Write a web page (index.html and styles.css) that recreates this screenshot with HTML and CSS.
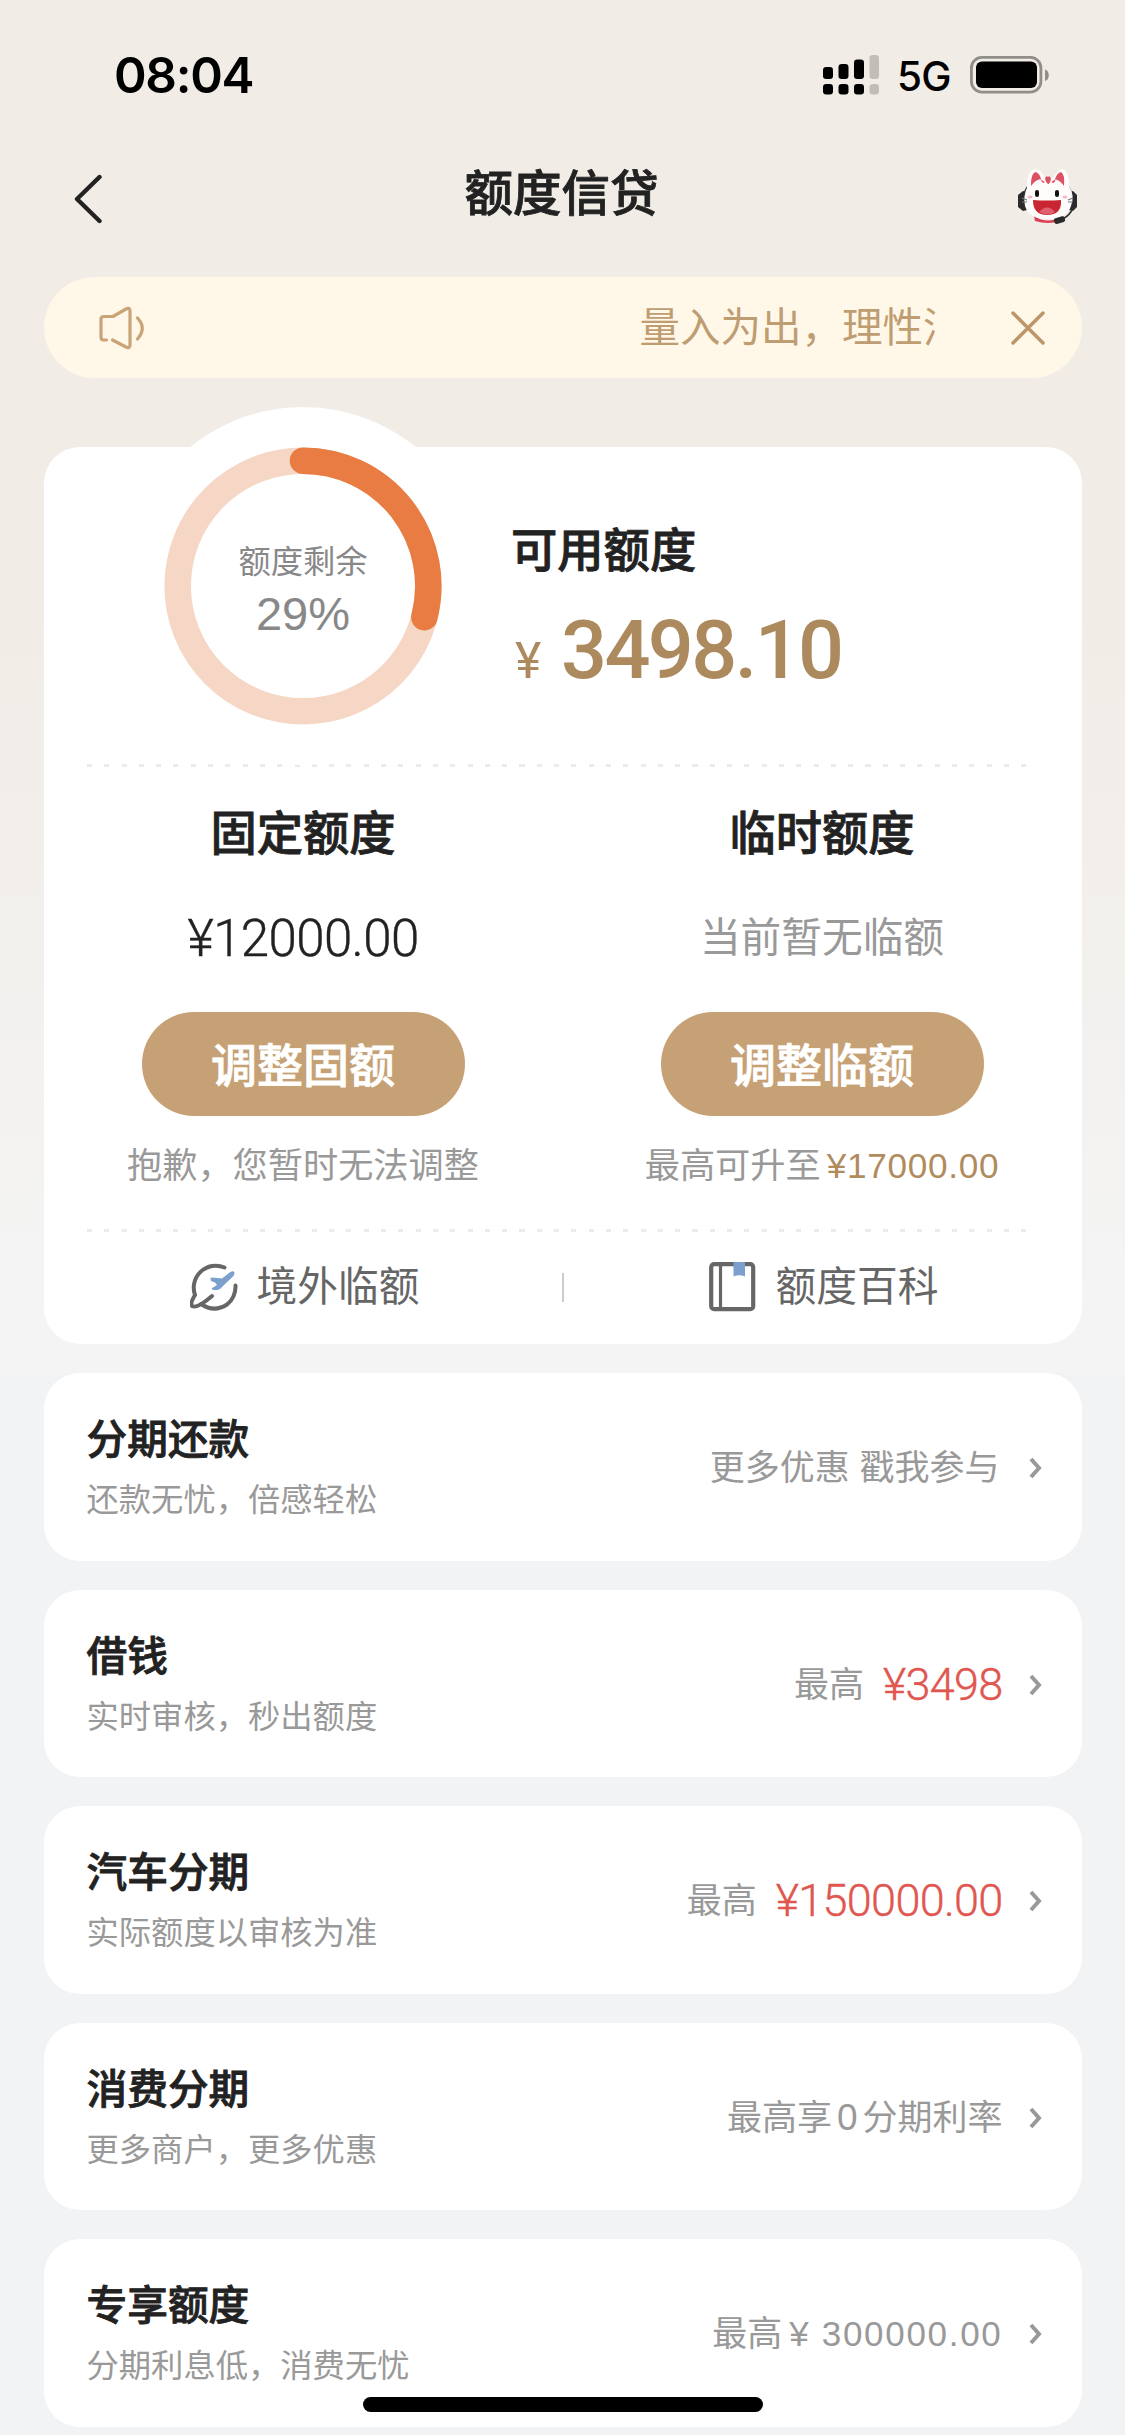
FILE: index.html
```html
<!DOCTYPE html>
<html lang="zh-CN">
<head>
<meta charset="utf-8">
<title>额度信贷</title>
<link rel="stylesheet" href="styles.css">
</head>
<body>
<div class="page">
  <header class="status">
    <span class="time">08:04</span>
    <div class="status-right">
      <svg class="signal" width="56" height="42" viewBox="0 0 56 42">
        <g fill="#000">
          <rect x="0" y="13" width="10" height="12" rx="3.200"/><rect x="0" y="30" width="10" height="10.500" rx="3.200"/>
          <rect x="15.500" y="10" width="10" height="15" rx="3.200"/><rect x="15.500" y="30" width="10" height="10.500" rx="3.200"/>
          <rect x="31" y="5.500" width="10" height="19.500" rx="3.200"/><rect x="31" y="30" width="10" height="10.500" rx="3.200"/>
        </g>
        <g fill="#c1bdb8"><rect x="46.500" y="1" width="9.500" height="24" rx="3.200"/><rect x="46.500" y="30" width="9.500" height="10.500" rx="3.200"/></g>
      </svg>
      <span class="net">5G</span>
      <svg class="battery" width="80" height="38" viewBox="0 0 80 38">
        <rect x="1.400" y="1.400" width="69.500" height="34.700" rx="10.500" fill="none" stroke="#918d89" stroke-width="2.800"/>
        <rect x="6" y="5.500" width="61" height="26.500" rx="6" fill="#000"/>
        <path d="M75 13.500c5 1 5 10.500 0 11.500z" fill="#918d89"/>
      </svg>
    </div>
  </header>

  <nav class="nav">
    <svg class="back" width="30" height="50" viewBox="0 0 30 50"><path d="M26.500 3 4 25l22.500 22" fill="none" stroke="#222" stroke-width="4.400" stroke-linecap="round" stroke-linejoin="round"/></svg>
    <h1>额度信贷</h1>
    <svg class="mascot" width="62" height="58" viewBox="0 0 62 58">
      <path d="M7 26Q9 19 15 14M55 26Q53 19 47 14" fill="none" stroke="#333" stroke-width="1.600"/>
      <path d="M1 27 6 23 10 24V42L6 43 1 39zM60 27 56 23 52 24V42L56 43 60 39z" fill="#2b2b2d"/>
      <path d="M17 48Q31 57 45 48L44 53Q31 57 18 53z" fill="#dc4055"/>
      <path d="M10 20Q10 1 19 1Q25 3 28 10H36Q40 3 44 1Q52 1 52 18Q58 27 54 38Q50 51 31 51Q12 51 8 38Q6 28 10 20z" fill="#fffdfc"/>
      <path d="M14 14Q15 4 19 4Q23 6 24 11Q18 12 14 18zM38 11Q40 5 44 4Q48 6 47 18Q44 13 38 11z" fill="#dd5262"/>
      <path d="M28 11Q29 7 31 9Q33 7 34 11Q33 16 31 16Q29 15 28 11zM23 11 28 14 26 15zM39 11 34 14 37 15z" fill="#dd5262"/>
      <rect x="18" y="22" width="4" height="7" rx="2" fill="#111"/><rect x="38" y="22" width="4" height="7" rx="2" fill="#111"/>
      <path d="M16 32Q30 33 44 32Q45 47 30 47Q16 47 16 32z" fill="#c92532"/>
      <path d="M22 44Q30 35 38 44Q31 49 22 44z" fill="#e0616d"/>
      <path d="M5 30 10 32M5 34H10M56 30 51 32M56 34H51" stroke="#777" stroke-width="1.200"/>
      <ellipse cx="13" cy="29" rx="2.500" ry="1.500" fill="#f6b8bd"/><ellipse cx="48" cy="29" rx="2.500" ry="1.500" fill="#f6b8bd"/>
      <path d="M56 40Q53 47 46 51" fill="none" stroke="#333" stroke-width="1.800"/><rect x="37" y="49" width="11" height="6" rx="2" fill="#2b2b2d" transform="rotate(-16 43 52)"/>
    </svg>
  </nav>

  <section class="notice">
    <svg class="speaker" width="50" height="46" viewBox="0 0 50 46" fill="none" stroke="#c9a477" stroke-width="3.200" stroke-linejoin="round" stroke-linecap="round">
      <path d="M8.500 35H5.500Q3 35 3 32V14Q3 11.500 6 11.500H15L28 4Q32 2 32 6V40Q32 44 28 42L14.500 35"/><path d="M39.500 13Q49 23 39.500 34"/>
    </svg>
    <div class="marquee">量入为出，理性消费</div>
    <svg class="close" width="34" height="34" viewBox="0 0 34 34"><path d="M2 2 32 32M32 2 2 32" stroke="#bd966a" stroke-width="3.500" stroke-linecap="round"/></svg>
  </section>

  <main>
    <section class="card quota">
      <div class="summary">
        <div class="gauge">
          <svg width="358" height="358" viewBox="-179 -179 358 358">
            <circle r="179" fill="#fff"/>
            <g fill="none" stroke-width="26.500">
              <circle r="125.300" stroke="#f6d6c4"/>
              <path d="M0-125.300A125.300 125.300 0 0 1 121.370 31.160" stroke="#e87c43" stroke-linecap="round"/>
            </g>
          </svg>
          <div class="gauge-text"><span class="gauge-label">额度剩余</span><span class="gauge-value">29%</span></div>
        </div>
        <div class="available">
          <h2>可用额度</h2>
          <div class="amount"><span class="yen">¥</span><span class="big">3498.10</span></div>
        </div>
      </div>
      <div class="dashes"></div>
      <div class="columns">
        <div class="col">
          <h2>固定额度</h2>
          <div class="value">¥12000.00</div>
          <button class="btn">调整固额</button>
          <p class="hint">抱歉，您暂时无法调整</p>
        </div>
        <div class="col">
          <h2>临时额度</h2>
          <div class="value none">当前暂无临额</div>
          <button class="btn">调整临额</button>
          <p class="hint">最高可升至<b>¥17000.00</b></p>
        </div>
      </div>
      <div class="dashes"></div>
      <div class="links">
        <a class="link">
          <svg width="48" height="50" viewBox="0 0 48 50">
            <path d="M34.500 5.500A22 22 0 0 0 5 33M45.500 23.500Q46 35 37 42.500Q24 51 11 42M5 33Q0 41 2 44Q7 47 22 34" fill="none" stroke="#666" stroke-width="4" stroke-linecap="round" stroke-linejoin="round"/>
            <path d="M20.500 17Q20 15.500 22 15.500L32 16.500 39 11Q43 8 44.500 10.500Q45 13 42 15.500L36 21 30 27Q27 29 22 27.500Q21 26 23 25.500L27 23 25 20.500 21 19z" fill="#7c9fcc"/>
          </svg>
          <span>境外临额</span>
        </a>
        <i class="bar"></i>
        <a class="link">
          <svg width="48" height="50" viewBox="0 0 48 50">
            <rect x="2.200" y="2.200" width="42" height="45" rx="3" fill="none" stroke="#666" stroke-width="4.200"/><path d="M11.500 2V47" stroke="#666" stroke-width="3.200"/>
            <path d="M24.500 0H36V14.500Q30.500 12 24.500 14.500z" fill="#7c9fcc"/>
          </svg>
          <span>额度百科</span>
        </a>
      </div>
    </section>

    <section class="card item">
      <div><h3>分期还款</h3><p>还款无忧，倍感轻松</p></div>
      <div class="more"><span class="wide">更多优惠 戳我参与</span><svg class="chev" width="14" height="24" viewBox="0 0 14 24"><path d="M3 3 11 12 3 21"/></svg></div>
    </section>
    <section class="card item">
      <div><h3>借钱</h3><p>实时审核，秒出额度</p></div>
      <div class="more"><span>最高</span><strong>¥3498</strong><svg class="chev" width="14" height="24" viewBox="0 0 14 24"><path d="M3 3 11 12 3 21"/></svg></div>
    </section>
    <section class="card item">
      <div><h3>汽车分期</h3><p>实际额度以审核为准</p></div>
      <div class="more"><span>最高</span><strong>¥150000.00</strong><svg class="chev" width="14" height="24" viewBox="0 0 14 24"><path d="M3 3 11 12 3 21"/></svg></div>
    </section>
    <section class="card item">
      <div><h3>消费分期</h3><p>更多商户，更多优惠</p></div>
      <div class="more"><span>最高享<span class="zero">0</span>分期利率</span><svg class="chev" width="14" height="24" viewBox="0 0 14 24"><path d="M3 3 11 12 3 21"/></svg></div>
    </section>
    <section class="card item">
      <div><h3>专享额度</h3><p>分期利息低，消费无忧</p></div>
      <div class="more"><span>最高<span class="num">¥ 300000.00</span></span><svg class="chev" width="14" height="24" viewBox="0 0 14 24"><path d="M3 3 11 12 3 21"/></svg></div>
    </section>
  </main>
  <div class="home"></div>
</div>
</body>
</html>
```
FILE: styles.css
```css
* { box-sizing: border-box; margin: 0; padding: 0; }
body { background: #f2f3f5; font-family: "Liberation Sans", "Noto Sans CJK SC", sans-serif; color: #222; }
svg { display: block; flex: none; }
h1, h2, h3 { font-weight: 500; -webkit-text-stroke: .8px currentColor; }
.page {
  position: relative; width: 1125px; height: 2435px; overflow: hidden;
  background: linear-gradient(#f1ece6 0, #f1ece6 600px, #f4f4f4 1290px, #f4f4f4 1373px, #f2f3f5 1373px);
}

.status { display: flex; justify-content: space-between; height: 150px; padding: 54px 75px 0 114px; color: #000; }
.time { font: 600 49.500px/42px Inter, sans-serif; letter-spacing: -1.300px; }
.status-right { display: flex; align-items: flex-start; }
.net { width: 53px; margin: 0 20px 0 18px; font: 500 40.500px/46px Inter, sans-serif; letter-spacing: -.8px; }
.battery { margin-top: 2px; }

.nav { display: flex; align-items: flex-start; justify-content: space-between; height: 127px; padding: 0 46px 0 73px; }
.nav h1 { font-size: 48.500px; line-height: 60px; margin: 14px 0 0 3px; }
.back { margin-top: 24px; }
.mascot { margin-top: 18px; }

.notice {
  display: flex; align-items: center; width: 1038px; height: 101px; margin-left: 43.500px;
  padding: 0 37px 0 54px; border-radius: 51px; background: #fff7e8;
}
.marquee {
  flex: 1; margin: 0 74px 0 0; padding-left: 492px; overflow: hidden; white-space: nowrap;
  font-size: 40.500px; line-height: 60px; color: #bf9d72;
}

main { display: flex; flex-direction: column; gap: 29px; padding: 69px 43.500px 0; }
.card { border-radius: 36px; background: #fff; }
.quota { height: 897px; }
.summary { display: flex; height: 317px; }
.gauge { position: relative; width: 358px; height: 358px; margin: -40px 0 0 80.500px; }
.gauge-text {
  position: absolute; inset: 0; display: flex; flex-direction: column; align-items: center;
  padding-top: 135px; color: #888;
}
.gauge-label { font-size: 32.300px; line-height: 40px; }
.gauge-value { margin-top: 7px; font-size: 47px; line-height: 50px; }
.available { padding: 74px 0 0 29px; }
h2 { font-size: 46.300px; line-height: 60px; }
.amount { display: flex; align-items: baseline; margin-top: 20px; color: #ad8a5e; font-family: Roboto, sans-serif; line-height: 100px; font-weight: 500; }
.yen { width: 50px; padding-left: 4px; font-size: 50px; font-weight: 400; }
.big { font-size: 81px; letter-spacing: -2.600px; }
.dashes {
  width: 948px; height: 3px; margin-left: 43px;
  background: repeating-linear-gradient(90deg, #ebebeb 0 5px, transparent 5px 17.300px);
}
.columns { display: flex; height: 462px; padding-top: 37px; }
.col { flex: 1; display: flex; flex-direction: column; align-items: center; }
.value { margin-top: 41px; padding-top: 4px; height: 60px; font: 300 51px/60px Roboto, sans-serif; letter-spacing: -.6px; -webkit-text-stroke: .4px currentColor; }
.value.none { padding-top: 0; font: 40.700px/60px "Noto Sans CJK SC", sans-serif; letter-spacing: 0; color: #999; -webkit-text-stroke: 0; }
.btn {
  width: 323px; height: 104px; margin-top: 47px; padding-bottom: 3px; border: 0; border-radius: 52px;
  background: #c6a175; color: #fff; font: 500 46px/101px "Noto Sans CJK SC", sans-serif; -webkit-text-stroke: .8px currentColor;
}
.hint { margin-top: 25px; font-size: 35.200px; line-height: 50px; color: #999; white-space: nowrap; }
.hint b { margin-left: 6px; font-weight: 400; color: #b08b5e; letter-spacing: .7px; }
.links { display: flex; align-items: center; height: 110px; }
.link { flex: 1; display: flex; align-items: center; justify-content: center; gap: 19px; padding-left: 3px; font-size: 40.700px; line-height: 60px; color: #666; }
.bar { width: 2px; height: 29px; margin: 0 -1px; background: #ccc; }

.item { display: flex; justify-content: space-between; height: 187.500px; padding: 37px 40px 0 43px; }
.item h3 { font-size: 40.700px; line-height: 60px; }
.item p { margin-top: 5px; font-size: 32.300px; line-height: 50px; color: #999; }
.more { display: flex; align-items: center; height: 116px; font-size: 35px; line-height: 50px; color: #999; }
.wide { margin-right: 3px; }
.more strong { margin-left: 19px; font: 300 45px/50px Roboto, sans-serif; letter-spacing: -.7px; color: #e05750; -webkit-text-stroke: .4px currentColor; }
.chev { margin-left: 25px; fill: none; stroke: #999; stroke-width: 4; }
.zero { margin: 0 5px; font-size: 37px; }
.num { margin-left: 7px; letter-spacing: 1.700px; }
.home { position: absolute; left: 363px; top: 2397px; width: 400px; height: 15px; border-radius: 8px; background: #000; }
```
